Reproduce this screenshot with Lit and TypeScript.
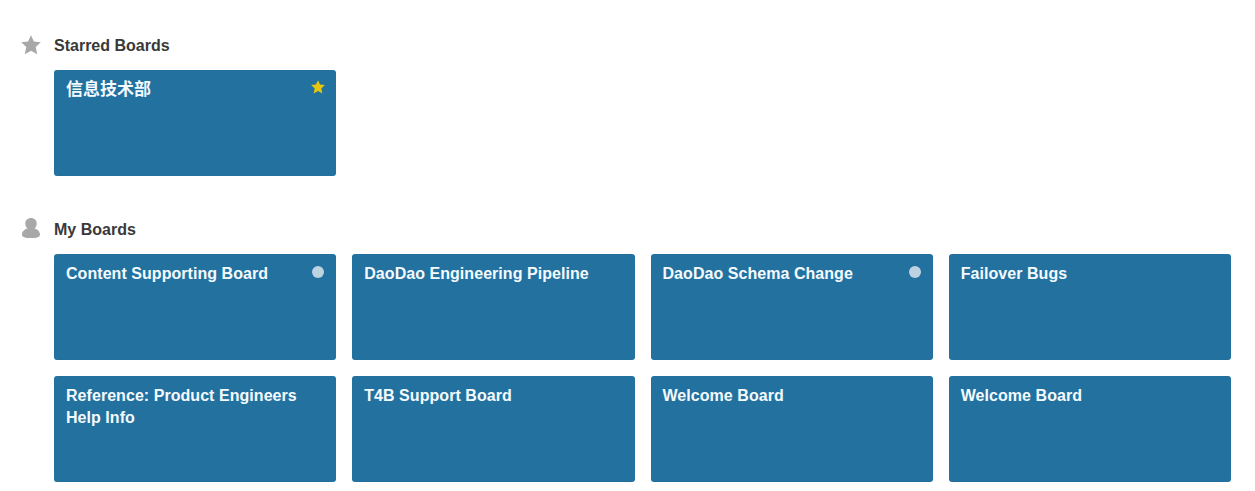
import { LitElement, html, css, svg, nothing } from "lit";
import { customElement, property } from "lit/decorators.js";

type Badge = "star" | "dot" | "";
interface Board { name: string; badge?: Badge; cjk?: boolean }

const starred: Board[] = [{ name: "信息技术部", badge: "star", cjk: true }];
const mine: Board[] = [
  { name: "Content Supporting Board", badge: "dot" },
  { name: "DaoDao Engineering Pipeline" },
  { name: "DaoDao Schema Change", badge: "dot" },
  { name: "Failover Bugs" },
  { name: "Reference: Product Engineers Help Info" },
  { name: "T4B Support Board" },
  { name: "Welcome Board" },
  { name: "Welcome Board" },
];

const starShape = svg`<path d="M10 .3 12.900 6.500 19.800 7.200 14.700 12 16.200 19.200 10 15.700 3.800 19.200 5.300 12 .2 7.200 7.100 6.500Z"/>`;
const personShape = svg`<path d="M10 0C6.800 0 4.300 2.300 4.300 5.400c0 2.200 1 3.900 2.400 5.200C3.400 11.400 1 13.700 1 16.700c0 2.500 3.600 3.300 9 3.300s9-.8 9-3.300c0-3-2.400-5.300-5.700-6.100 1.400-1.300 2.400-3 2.400-5.200C15.700 2.300 13.200 0 10 0Z"/>`;

@customElement("board-tile")
export class BoardTile extends LitElement {
  @property({ attribute: false }) board!: Board;

  static styles = css`
    :host { display: block; min-width: 0; }
    .tile {
      box-sizing: border-box;
      display: flex;
      justify-content: space-between;
      height: 106px;
      padding: 8px 11px 8px 12px;
      border-radius: 3px;
      background: #23719f;
      color: #f4fbff;
    }
    .name { font-size: 16px; font-weight: 700; line-height: 22px; letter-spacing: 0.05px; max-width: 240px; padding-top: 1px; }
    .cjk { font-size: 17px; letter-spacing: 0; }
    .star { flex: none; width: 14px; height: 14px; margin-top: 2px; fill: #e6c60d; }
    .dot { flex: none; width: 12px; height: 12px; margin: 4px 1px 0 0; border-radius: 50%; background: #bdd3e1; }
  `;

  render() {
    const { name, badge, cjk } = this.board;
    return html`<div class="tile">
      <span class="name ${cjk ? "cjk" : ""}">${name}</span>
      ${badge === "star"
        ? html`<svg class="star" viewBox="0 0 20 20">${starShape}</svg>`
        : badge === "dot" ? html`<span class="dot"></span>` : nothing}
    </div>`;
  }
}

@customElement("app-root")
export class AppRoot extends LitElement {
  static styles = css`
    :host {
      display: block;
      box-sizing: border-box;
      height: 491px;
      overflow: hidden;
      padding: 34px 24px 0 20px;
      background: #fff;
      font-family: "Liberation Sans", "Noto Sans CJK SC", sans-serif;
    }
    .section + .section { margin-top: 42px; }
    .head { display: flex; align-items: center; gap: 12px; height: 22px; margin-bottom: 14px; }
    .icon { width: 22px; height: 20px; fill: #a8a8a8; }
    .person { margin-bottom: 2px; }
    .title { margin: 0; padding-top: 2px; font-size: 16px; font-weight: 700; line-height: 22px; color: #393939; }
    .grid { display: grid; grid-template-columns: repeat(4, minmax(0, 1fr)); gap: 16px; margin-left: 34px; }
  `;

  private section(title: string, kind: string, shape: unknown, boards: Board[]) {
    return html`<section class="section">
      <div class="head">
        <svg class="icon ${kind}" viewBox="0 0 20 20">${shape}</svg>
        <h2 class="title">${title}</h2>
      </div>
      <div class="grid">${boards.map((b) => html`<board-tile .board=${b}></board-tile>`)}</div>
    </section>`;
  }

  render() {
    return html`${this.section("Starred Boards", "favourite", starShape, starred)}
      ${this.section("My Boards", "person", personShape, mine)}`;
  }
}
